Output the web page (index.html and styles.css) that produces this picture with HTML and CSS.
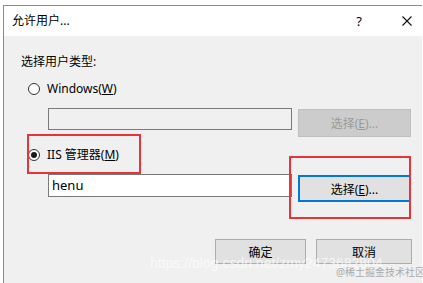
FILE: index.html
```html
<!DOCTYPE html>
<html lang="zh-CN">
<head>
  <meta charset="UTF-8">
  <title>允许用户...</title>
  <link rel="stylesheet" href="styles.css">
</head>
<body>
  <div class="dialog">
    <div class="titlebar">
      <span class="title">允许用户...</span>
      <span class="caption-btn help">?</span>
      <span class="caption-btn close">
        <svg width="10" height="10" viewBox="0 0 10 10">
          <path d="M0.5 0.5 L9.5 9.5 M9.5 0.5 L0.5 9.5" stroke="#111" stroke-width="1.1" fill="none"/>
        </svg>
      </span>
    </div>

    <div class="dialog-body">
      <p class="group-label">选择用户类型:</p>

      <div class="radio-row">
        <span class="radio"></span>
        <span>Windows(<u>W</u>)</span>
      </div>
      <div class="field-row">
        <div class="textbox disabled"></div>
        <button class="btn btn-disabled">选择(<u>E</u>)...</button>
      </div>

      <div class="radio-row second">
        <span class="radio checked"></span>
        <span>IIS 管理器(<u>M</u>)</span>
      </div>
      <div class="field-row">
        <div class="textbox">henu</div>
        <button class="btn btn-default">选择(<u>E</u>)...</button>
      </div>

      <div class="footer">
        <button class="btn btn-ok">确定</button>
        <button class="btn btn-cancel">取消</button>
      </div>

      <div class="mark mark-radio"></div>
      <div class="mark mark-button"></div>

      <div class="watermark">https://blog.csdn.net/zmy2473682804</div>
      <div class="watermark-sub">@稀土掘金技术社区</div>
    </div>
  </div>
</body>
</html>
```

FILE: styles.css
```css
* {
  margin: 0;
  padding: 0;
  box-sizing: border-box;
}

body {
  font-family: "Noto Sans", "Noto Sans CJK SC", sans-serif;
  font-size: 12px;
  color: #000000;
  background: #ffffff;
  width: 423px;
  height: 283px;
  overflow: hidden;
}

.dialog {
  margin: 5px 0 0 3px;
  width: 419px;
  height: 278px;
  border-left: 1px solid #8a8a8a;
  border-top: 1px solid #8a8a8a;
  display: flex;
  flex-direction: column;
}

.titlebar {
  height: 30px;
  background: #ffffff;
  display: flex;
  align-items: center;
  padding-left: 8px;
  padding-right: 3px;
}

.title {
  flex: 1;
  line-height: 16px;
}

.caption-btn {
  width: 24px;
  display: flex;
  justify-content: center;
  align-items: center;
}

.help {
  font-size: 13px;
  margin-right: 24px;
}

.dialog-body {
  flex: 1;
  background: #f0f0f0;
  position: relative;
  padding: 18px 10px 0 17px;
}

.group-label {
  line-height: 16px;
}

.radio-row {
  display: flex;
  align-items: center;
  height: 16px;
  line-height: 16px;
  margin-top: 11px;
  gap: 7px;
  padding-left: 7px;
}

.radio-row.second {
  margin-top: 10px;
}

.radio {
  width: 12px;
  height: 12px;
  border: 1px solid #333333;
  border-radius: 50%;
  background: #ffffff;
  display: flex;
  justify-content: center;
  align-items: center;
}

.radio.checked::after {
  content: "";
  width: 6px;
  height: 6px;
  border-radius: 50%;
  background: #1a1a1a;
}

.field-row {
  display: flex;
  align-items: flex-start;
  gap: 6px;
  margin-top: 11px;
  padding-left: 27px;
}

.textbox {
  width: 244px;
  height: 23px;
  border: 1px solid #7a7a7a;
  background: #ffffff;
  padding-left: 3px;
  font-size: 13px;
  line-height: 21px;
}

.textbox.disabled {
  background: #f0f0f0;
  height: 22px;
}

.btn {
  font-family: inherit;
  font-size: 12px;
  color: #000000;
  background: #e1e1e1;
  border: 1px solid #adadad;
  height: 27px;
  width: 113px;
  margin-top: 1px;
}

.btn-disabled {
  background: #cccccc;
  border-color: #bfbfbf;
  color: #9a9a9a;
  height: 28px;
}

.btn-default {
  border: 2px solid #0078d7;
}

.footer {
  display: flex;
  justify-content: flex-end;
  gap: 10px;
  margin-top: 36px;
}

.btn-ok {
  width: 91px;
  height: 25px;
}

.btn-cancel {
  width: 96px;
  height: 25px;
}

.mark {
  position: absolute;
  border: 2px solid #e5353b;
}

.mark-radio {
  left: 23px;
  top: 98px;
  width: 114px;
  height: 40px;
}

.mark-button {
  left: 285px;
  top: 120px;
  width: 122px;
  height: 63px;
}

.watermark {
  position: absolute;
  left: 146px;
  top: 219px;
  font-family: "Liberation Sans", sans-serif;
  font-size: 14px;
  line-height: 17px;
  color: rgba(255, 255, 255, 0.7);
  white-space: nowrap;
}

.watermark-sub {
  position: absolute;
  left: 332px;
  top: 230px;
  font-size: 10px;
  line-height: 12px;
  color: rgba(150, 150, 150, 0.8);
  white-space: nowrap;
}
```
